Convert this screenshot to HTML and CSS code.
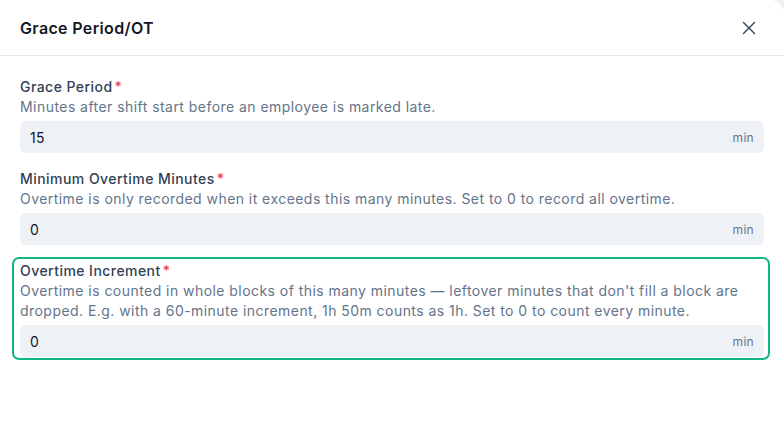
FILE: index.html
```html
<!DOCTYPE html>
<html lang="en">

<head>
    <meta charset="UTF-8">
    <meta name="viewport" content="width=device-width, initial-scale=1.0">
    <title>Grace Period/OT</title>
    <link rel="stylesheet" href="styles.css">
</head>

<body>
    <div class="modal">
        <div class="modal-header">
            <h3>Grace Period/OT</h3>
            <button class="close-btn" aria-label="Close">
                <svg width="14" height="14" viewBox="0 0 14 14">
                    <path d="M1.5 1.5 L12.5 12.5 M12.5 1.5 L1.5 12.5" stroke="#334155" stroke-width="1.4" stroke-linecap="round" />
                </svg>
            </button>
        </div>

        <div class="modal-body">
            <div class="field">
                <label class="field-label">Grace Period<span class="req">*</span></label>
                <p class="field-help">Minutes after shift start before an employee is marked late.</p>
                <div class="input-wrap">
                    <input type="text" value="15">
                    <span class="unit">min</span>
                </div>
            </div>

            <div class="field">
                <label class="field-label">Minimum Overtime Minutes<span class="req">*</span></label>
                <p class="field-help">Overtime is only recorded when it exceeds this many minutes. Set to 0 to record all overtime.</p>
                <div class="input-wrap">
                    <input type="text" value="0">
                    <span class="unit">min</span>
                </div>
            </div>

            <!-- highlighted field -->
            <div class="field highlight">
                <label class="field-label">Overtime Increment<span class="req">*</span></label>
                <p class="field-help">Overtime is counted in whole blocks of this many minutes — leftover minutes that don't fill a block are dropped. E.g. with a 60-minute increment, 1h 50m counts as 1h. Set to 0 to count every minute.</p>
                <div class="input-wrap">
                    <input type="text" value="0">
                    <span class="unit">min</span>
                </div>
            </div>
        </div>
    </div>
</body>

</html>
```

FILE: styles.css
```css
body {
    margin: 0px;
    background: #eef0f3;
    font-family: Inter, "Noto Sans", sans-serif;
}

.modal {
    background: #fff;
    height: 430px;
    border-top-right-radius: 14px;
}

.modal-header {
    display: flex;
    justify-content: space-between;
    align-items: center;
    height: 55px;
    padding: 0 20px;
    border-bottom: 1px solid #e5e7eb;
}

.modal-header h3 {
    margin: 0;
    font-size: 16px;
    font-weight: 600;
    letter-spacing: 0.35px;
    color: #111827;
}

.close-btn {
    background: none;
    border: none;
    padding: 0;
    margin-right: 8px;
    cursor: pointer;
    display: flex;
}

.modal-body {
    padding: 21px 20px;
}

.field {
    margin-bottom: 16px;
}

.field-label {
    display: block;
    font-size: 14px;
    line-height: 20px;
    font-weight: 500;
    letter-spacing: 0.45px;
    color: #334155;
}

.req {
    color: #ef4444;
    margin-left: 2px;
}

.field-help {
    margin: 0 0 4px;
    font-size: 14px;
    line-height: 20px;
    letter-spacing: 0.45px;
    color: #64748b;
}

.input-wrap {
    display: flex;
    align-items: center;
    height: 32px;
    background: #eef1f6;
    border-radius: 6px;
    padding: 0 10px;
}

.input-wrap input {
    flex: 1;
    border: none;
    background: transparent;
    font-family: inherit;
    font-size: 14px;
    letter-spacing: 0.3px;
    color: #111827;
    outline: none;
    padding: 0;
}

.unit {
    font-size: 12px;
    letter-spacing: 0.3px;
    color: #64748b;
}

/* Tour highlight drawn over the field */
.highlight {
    position: relative;
}

.highlight::after {
    content: "";
    position: absolute;
    top: -4px;
    bottom: -3px;
    left: -8px;
    right: -6px;
    border: 2px solid #10b981;
    border-radius: 7px;
    pointer-events: none;
}
```
